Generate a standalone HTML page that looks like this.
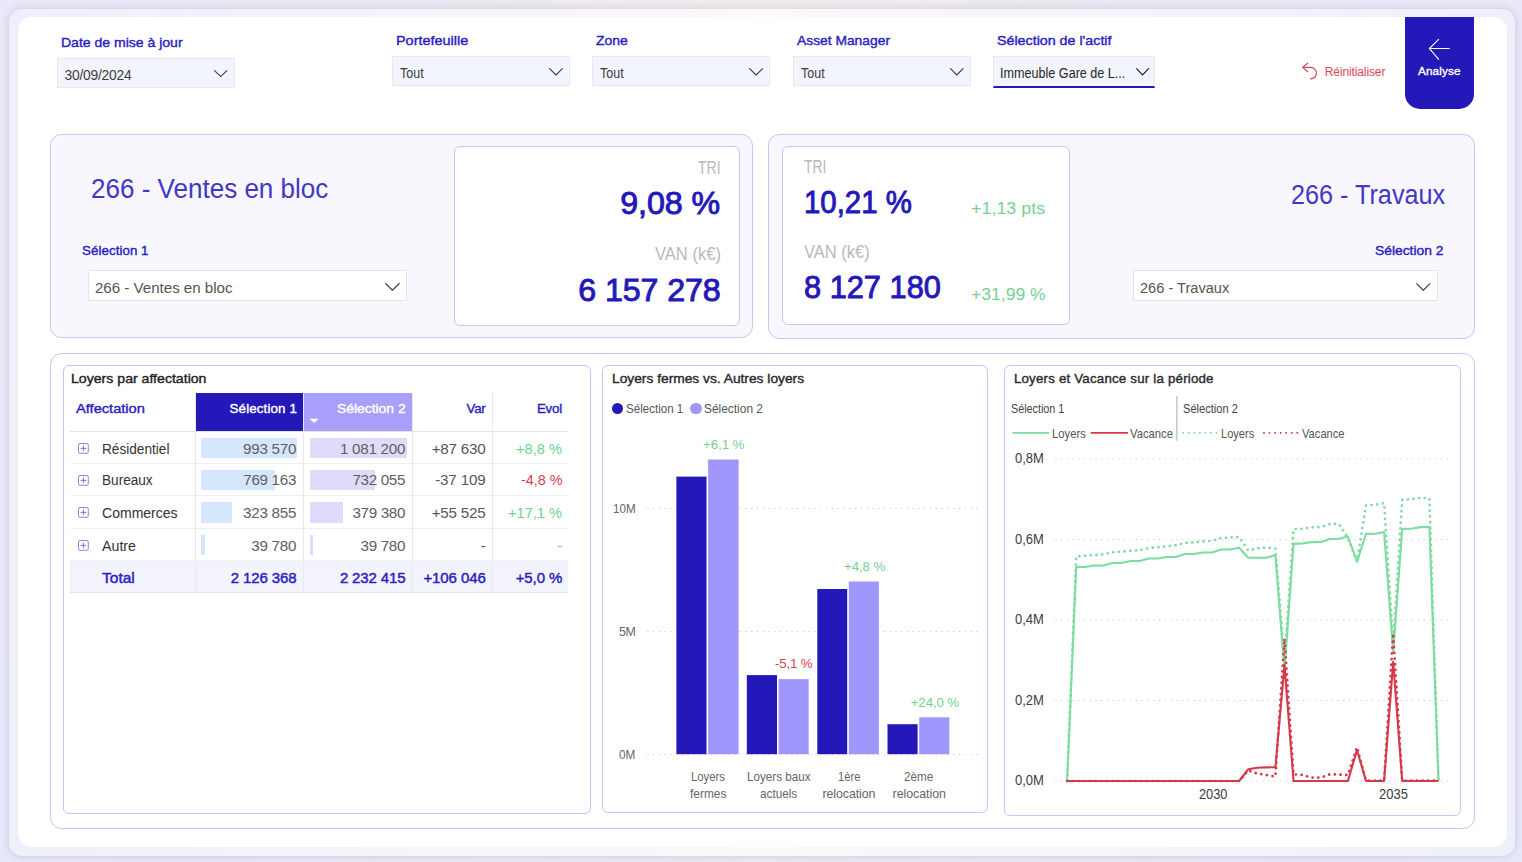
<!DOCTYPE html>
<html lang="fr">
<head>
<meta charset="utf-8">
<title>Analyse</title>
<style>
*{box-sizing:border-box;margin:0;padding:0}
html,body{width:1522px;height:862px;overflow:hidden}
body{position:relative;font-family:"Liberation Sans","DejaVu Sans",sans-serif;color:#444;
 background:linear-gradient(180deg,rgba(233,233,250,0) 0%,rgba(230,233,252,.45) 100%),linear-gradient(90deg,#e9e9f9 0%,#ece9f3 25%,#f2edf0 50%,#ece9f3 75%,#e9e9fa 100%);}
.abs{position:absolute}
#frame{position:absolute;left:9px;top:9px;width:1506px;height:847px;border-radius:13.5px;
 background:linear-gradient(90deg,#efeffc 0%,#f6f3fa 25%,#fcf9fa 50%,#f6f3fa 75%,#efeffc 100%);
 box-shadow:0 0 8px 0 rgba(80,78,110,.22)}
#sheet{position:absolute;left:18px;top:17px;width:1489px;height:830px;border-radius:14px;background:#fff}
.sel{position:absolute;background:#f3f5fe;border:1px solid #e7e8f1}
.selw{position:absolute;background:#fff;border:1px solid #e4e4ee}
.panel{position:absolute;background:#f7f7fd;border:1px solid #c7c4f6;border-radius:11.5px}
.card{position:absolute;background:#fff;border:1px solid #c7c4f6;border-radius:6px}
.t{position:absolute;white-space:nowrap}
</style>
</head>
<body>
<div id="frame"></div>
<div id="sheet"></div>

<!-- ===== header filters ===== -->
<div class="t" style="left:61.4px;top:35px;font-size:13.3px;line-height:15px;color:#2a1dc0;-webkit-text-stroke:0.39px #2a1dc0;transform:scaleX(1.0544);transform-origin:0 0;">Date de mise à jour</div>
<div class="sel" style="left:57px;top:58px;width:178px;height:30px"></div>
<div class="t" style="left:64.6px;top:68px;font-size:13.8px;line-height:15px;color:#3c3c3c;letter-spacing:-0.23px;">30/09/2024</div>
<svg class="abs" style="left:213.3px;top:69.3px" width="15.4" height="9.0" viewBox="-1 -1 15.4 9.0"><path d="M0.3 0.3 L6.70 6.60 L13.10 0.3" fill="none" stroke="#3a3a3a" stroke-width="1.1"/></svg>
<div class="t" style="left:396.2px;top:33px;font-size:13.3px;line-height:15px;color:#2a1dc0;-webkit-text-stroke:0.39px #2a1dc0;transform:scaleX(1.0851);transform-origin:0 0;">Portefeuille</div>
<div class="sel" style="left:392px;top:56px;width:178px;height:30px"></div>
<div class="t" style="left:400.0px;top:66px;font-size:13.8px;line-height:15px;color:#3c3c3c;transform:scaleX(0.9048);transform-origin:0 0;">Tout</div>
<svg class="abs" style="left:548.3px;top:67.4px" width="15.9" height="9.3" viewBox="-1 -1 15.9 9.3"><path d="M0.3 0.3 L6.95 6.90 L13.60 0.3" fill="none" stroke="#3a3a3a" stroke-width="1.1"/></svg>
<div class="t" style="left:596.0px;top:33px;font-size:13.3px;line-height:15px;color:#2a1dc0;-webkit-text-stroke:0.39px #2a1dc0;transform:scaleX(1.0490);transform-origin:0 0;">Zone</div>
<div class="sel" style="left:592px;top:56px;width:178px;height:30px"></div>
<div class="t" style="left:600.3px;top:66px;font-size:13.8px;line-height:15px;color:#3c3c3c;transform:scaleX(0.9048);transform-origin:0 0;">Tout</div>
<svg class="abs" style="left:748.0px;top:67.4px" width="16.2" height="9.3" viewBox="-1 -1 16.2 9.3"><path d="M0.3 0.3 L7.10 6.90 L13.90 0.3" fill="none" stroke="#3a3a3a" stroke-width="1.1"/></svg>
<div class="t" style="left:797.3px;top:33px;font-size:13.3px;line-height:15px;color:#2a1dc0;-webkit-text-stroke:0.39px #2a1dc0;transform:scaleX(1.0397);transform-origin:0 0;">Asset Manager</div>
<div class="sel" style="left:793px;top:56px;width:178px;height:30px"></div>
<div class="t" style="left:801.2px;top:66px;font-size:13.8px;line-height:15px;color:#3c3c3c;transform:scaleX(0.9048);transform-origin:0 0;">Tout</div>
<svg class="abs" style="left:949.0px;top:67.4px" width="15.7" height="9.3" viewBox="-1 -1 15.7 9.3"><path d="M0.3 0.3 L6.85 6.90 L13.40 0.3" fill="none" stroke="#3a3a3a" stroke-width="1.1"/></svg>
<div class="t" style="left:996.5px;top:33px;font-size:13.3px;line-height:15px;color:#2a1dc0;-webkit-text-stroke:0.39px #2a1dc0;transform:scaleX(1.0723);transform-origin:0 0;">Sélection de l'actif</div>
<div class="sel" style="left:992.5px;top:56px;width:162.5px;height:32px;border-bottom:2.4px solid #2518b8"></div>
<div class="t" style="left:1000.0px;top:66px;font-size:13.8px;line-height:15px;color:#262626;transform:scaleX(0.9133);transform-origin:0 0;">Immeuble Gare de L...</div>
<svg class="abs" style="left:1134.9px;top:67.4px" width="15.1" height="9.3" viewBox="-1 -1 15.1 9.3"><path d="M0.3 0.3 L6.55 6.90 L12.80 0.3" fill="none" stroke="#222" stroke-width="1.2"/></svg>
<svg class="abs" style="left:1300px;top:61px" width="20" height="20" viewBox="1300 61 20 20"><path d="M1307.7 63.2 L1302.6 67.4 L1307.7 71.7 M1302.8 67.4 H1310.8 A5.75 5.75 0 0 1 1310.6 78.9" fill="none" stroke="#d9485a" stroke-width="1.15" stroke-linecap="round" stroke-linejoin="round"/></svg>
<div class="t" style="left:1324.8px;top:65px;font-size:12px;line-height:14px;color:#d8485b;letter-spacing:-0.12px;">Réinitialiser</div>
<div class="abs" style="left:1405px;top:17px;width:69px;height:92px;background:#2518b8;border-radius:0 0 15px 15px"></div>
<svg class="abs" style="left:1426px;top:36px" width="26" height="26" viewBox="1426 36 26 26"><path d="M1438.9 39.2 L1429.4 48.5 L1438.9 59.6 M1429.4 48.5 H1449.7" fill="none" stroke="#fff" stroke-width="1.15" stroke-linejoin="miter"/></svg>
<div class="t" style="left:1418.0px;top:64px;font-size:11.7px;line-height:13px;color:#fff;-webkit-text-stroke:0.35px #fff;letter-spacing:0.16px;">Analyse</div>
<!-- ===== KPI panels ===== -->
<div class="panel" style="left:50px;top:134px;width:703px;height:203.5px"></div>
<div class="panel" style="left:768px;top:134px;width:707px;height:205px"></div>
<div class="card" style="left:454px;top:146px;width:286px;height:180px"></div>
<div class="card" style="left:782px;top:146px;width:288px;height:178.5px"></div>
<div class="t" style="left:91.0px;top:172px;font-size:28.4px;line-height:32px;color:#4338c6;transform:scaleX(0.9168);transform-origin:0 0;">266 - Ventes en bloc</div>
<div class="t" style="left:82.1px;top:243px;font-size:13.3px;line-height:15px;color:#2a1dc0;-webkit-text-stroke:0.39px #2a1dc0;letter-spacing:0.06px;">Sélection 1</div>
<div class="selw" style="left:88px;top:270px;width:319px;height:31px"></div>
<div class="t" style="left:94.9px;top:279px;font-size:15.2px;line-height:17px;color:#555;letter-spacing:-0.04px;">266 - Ventes en bloc</div>
<svg class="abs" style="left:383.6px;top:281.7px" width="16.8" height="9.7" viewBox="-1 -1 16.8 9.7"><path d="M0.3 0.3 L7.40 7.30 L14.50 0.3" fill="none" stroke="#444" stroke-width="1.2"/></svg>
<div class="t" style="left:698.2px;top:158px;font-size:17.6px;line-height:20px;color:#b9b9b9;transform:scaleX(0.7972);transform-origin:0 0;">TRI</div>
<div class="t" style="left:620.2px;top:185px;font-size:32.2px;line-height:36px;color:#2518b8;-webkit-text-stroke:0.95px #2518b8;letter-spacing:-0.07px;">9,08 %</div>
<div class="t" style="left:654.8px;top:244px;font-size:17.6px;line-height:20px;color:#b9b9b9;transform:scaleX(0.9417);transform-origin:0 0;">VAN (k€)</div>
<div class="t" style="left:578.3px;top:272px;font-size:32.2px;line-height:36px;color:#2518b8;-webkit-text-stroke:0.95px #2518b8;letter-spacing:-0.09px;">6 157 278</div>
<div class="t" style="left:803.6px;top:157px;font-size:17.6px;line-height:20px;color:#b9b9b9;transform:scaleX(0.7936);transform-origin:0 0;">TRI</div>
<div class="t" style="left:803.6px;top:184px;font-size:32.2px;line-height:36px;color:#2518b8;-webkit-text-stroke:0.95px #2518b8;transform:scaleX(0.9132);transform-origin:0 0;">10,21 %</div>
<div class="t" style="left:971.4px;top:199px;font-size:16.4px;line-height:18px;color:#74d394;transform:scaleX(1.0923);transform-origin:0 0;">+1,13 pts</div>
<div class="t" style="left:803.6px;top:242px;font-size:17.6px;line-height:20px;color:#b9b9b9;transform:scaleX(0.9375);transform-origin:0 0;">VAN (k€)</div>
<div class="t" style="left:804.1px;top:269px;font-size:32.2px;line-height:36px;color:#2518b8;-webkit-text-stroke:0.95px #2518b8;transform:scaleX(0.9557);transform-origin:0 0;">8 127 180</div>
<div class="t" style="left:970.9px;top:285px;font-size:16.4px;line-height:18px;color:#74d394;transform:scaleX(1.0709);transform-origin:0 0;">+31,99 %</div>
<div class="t" style="left:1290.7px;top:178px;font-size:28.4px;line-height:32px;color:#4338c6;transform:scaleX(0.8880);transform-origin:0 0;">266 - Travaux</div>
<div class="t" style="left:1374.7px;top:243px;font-size:13.3px;line-height:15px;color:#2a1dc0;-webkit-text-stroke:0.39px #2a1dc0;transform:scaleX(1.0394);transform-origin:0 0;">Sélection 2</div>
<div class="selw" style="left:1133px;top:270px;width:305px;height:31px"></div>
<div class="t" style="left:1139.9px;top:279px;font-size:15.2px;line-height:17px;color:#555;transform:scaleX(0.9609);transform-origin:0 0;">266 - Travaux</div>
<svg class="abs" style="left:1414.8px;top:281.7px" width="16.5" height="9.7" viewBox="-1 -1 16.5 9.7"><path d="M0.3 0.3 L7.25 7.30 L14.20 0.3" fill="none" stroke="#444" stroke-width="1.2"/></svg>
<!-- ===== bottom panel + table ===== -->
<div class="panel" style="left:50px;top:352.5px;width:1425px;height:476.5px;background:#fff"></div>
<div class="card" style="left:63px;top:365px;width:528px;height:449.4px"></div>
<div class="t" style="left:70.6px;top:371px;font-size:13.3px;line-height:15px;color:#222;-webkit-text-stroke:0.39px #222;transform:scaleX(1.0614);transform-origin:0 0;">Loyers par affectation</div>
<div class="abs" style="left:195.3px;top:392.7px;width:108.2px;height:38.3px;background:#2518b8"></div>
<div class="abs" style="left:303.8px;top:392.7px;width:108.9px;height:38.3px;background:#a79ffa"></div>
<div class="t" style="left:76.2px;top:401px;font-size:13.3px;line-height:15px;color:#2a1dc0;-webkit-text-stroke:0.39px #2a1dc0;transform:scaleX(1.1006);transform-origin:0 0;">Affectation</div>
<div class="t" style="left:229.6px;top:401px;font-size:13.3px;line-height:15px;color:#fff;-webkit-text-stroke:0.39px #fff;letter-spacing:0.15px;">Sélection 1</div>
<div class="t" style="left:337.4px;top:401px;font-size:13.3px;line-height:15px;color:#fff;-webkit-text-stroke:0.39px #fff;transform:scaleX(1.0425);transform-origin:0 0;">Sélection 2</div>
<svg class="abs" style="left:309px;top:418px" width="11" height="6" viewBox="0 0 11 6"><path d="M0.5 0.7 H9.7 L5.1 5 Z" fill="#fff"/></svg>
<div class="t" style="left:466.6px;top:401px;font-size:13.3px;line-height:15px;color:#2a1dc0;-webkit-text-stroke:0.39px #2a1dc0;letter-spacing:-0.25px;">Var</div>
<div class="t" style="left:536.9px;top:401px;font-size:13.3px;line-height:15px;color:#2a1dc0;-webkit-text-stroke:0.39px #2a1dc0;letter-spacing:-0.16px;">Evol</div>
<div class="abs" style="left:70px;top:560.3px;width:498px;height:31.7px;background:#f3f4fb"></div>
<div class="abs" style="left:70px;top:431.0px;width:498px;height:1px;background:#e4e4e8"></div>
<div class="abs" style="left:70px;top:463.2px;width:498px;height:1px;background:#efeff2"></div>
<div class="abs" style="left:70px;top:495.2px;width:498px;height:1px;background:#efeff2"></div>
<div class="abs" style="left:70px;top:527.9px;width:498px;height:1px;background:#efeff2"></div>
<div class="abs" style="left:70px;top:559.8px;width:498px;height:1px;background:#efeff2"></div>
<div class="abs" style="left:70px;top:592.0px;width:498px;height:1px;background:#e4e4e8"></div>
<div class="abs" style="left:194.6px;top:393px;width:1px;height:199px;background:#e9e9ed"></div>
<div class="abs" style="left:303.2px;top:393px;width:1px;height:199px;background:#e9e9ed"></div>
<div class="abs" style="left:412.4px;top:393px;width:1px;height:199px;background:#e9e9ed"></div>
<div class="abs" style="left:492.0px;top:393px;width:1px;height:199px;background:#e9e9ed"></div>
<div class="abs" style="left:201.4px;top:437.7px;width:95.7px;height:20.4px;background:#d4e7fd"></div>
<div class="abs" style="left:310px;top:437.7px;width:96.7px;height:20.4px;background:#dfdbfb"></div>
<svg class="abs" style="left:77.1px;top:442.1px" width="13" height="13" viewBox="-1 -1 13 13"><rect x="0.5" y="0.5" width="9.8" height="9.8" rx="1.6" fill="#fff" stroke="#8b82ea" stroke-width="1"/><path d="M2.6 5.4 H8.2 M5.4 2.6 V8.2" stroke="#7b72e0" stroke-width="1" fill="none"/></svg>
<div class="t" style="left:101.5px;top:440px;font-size:15.2px;line-height:17px;color:#333;transform:scaleX(0.8976);transform-origin:0 0;">Résidentiel</div>
<div class="t" style="left:243.1px;top:440px;font-size:15.2px;line-height:17px;color:#606060;letter-spacing:-0.27px;">993 570</div>
<div class="t" style="left:339.9px;top:440px;font-size:15.2px;line-height:17px;color:#606060;letter-spacing:-0.25px;">1 081 200</div>
<div class="t" style="left:431.7px;top:440px;font-size:15.2px;line-height:17px;color:#585858;letter-spacing:-0.21px;">+87 630</div>
<div class="t" style="left:516.4px;top:440px;font-size:15.2px;line-height:17px;color:#72d192;transform:scaleX(0.9614);transform-origin:0 0;">+8,8 %</div>
<div class="abs" style="left:201.4px;top:470.0px;width:73.5px;height:20.4px;background:#d4e7fd"></div>
<div class="abs" style="left:310px;top:470.0px;width:65.3px;height:20.4px;background:#dfdbfb"></div>
<svg class="abs" style="left:77.1px;top:473.8px" width="13" height="13" viewBox="-1 -1 13 13"><rect x="0.5" y="0.5" width="9.8" height="9.8" rx="1.6" fill="#fff" stroke="#8b82ea" stroke-width="1"/><path d="M2.6 5.4 H8.2 M5.4 2.6 V8.2" stroke="#7b72e0" stroke-width="1" fill="none"/></svg>
<div class="t" style="left:101.5px;top:471px;font-size:15.2px;line-height:17px;color:#333;transform:scaleX(0.8955);transform-origin:0 0;">Bureaux</div>
<div class="t" style="left:243.3px;top:471px;font-size:15.2px;line-height:17px;color:#606060;letter-spacing:-0.31px;">769 163</div>
<div class="t" style="left:352.4px;top:471px;font-size:15.2px;line-height:17px;color:#606060;letter-spacing:-0.31px;">732 055</div>
<div class="t" style="left:435.2px;top:471px;font-size:15.2px;line-height:17px;color:#585858;letter-spacing:-0.16px;">-37 109</div>
<div class="t" style="left:520.7px;top:471px;font-size:15.2px;line-height:17px;color:#d6404f;transform:scaleX(0.9470);transform-origin:0 0;">-4,8 %</div>
<div class="abs" style="left:201.4px;top:502.3px;width:31.1px;height:20.4px;background:#d4e7fd"></div>
<div class="abs" style="left:310px;top:502.3px;width:32.9px;height:20.4px;background:#dfdbfb"></div>
<svg class="abs" style="left:77.1px;top:506.3px" width="13" height="13" viewBox="-1 -1 13 13"><rect x="0.5" y="0.5" width="9.8" height="9.8" rx="1.6" fill="#fff" stroke="#8b82ea" stroke-width="1"/><path d="M2.6 5.4 H8.2 M5.4 2.6 V8.2" stroke="#7b72e0" stroke-width="1" fill="none"/></svg>
<div class="t" style="left:101.5px;top:504px;font-size:15.2px;line-height:17px;color:#333;transform:scaleX(0.9240);transform-origin:0 0;">Commerces</div>
<div class="t" style="left:243.1px;top:504px;font-size:15.2px;line-height:17px;color:#606060;letter-spacing:-0.27px;">323 855</div>
<div class="t" style="left:352.4px;top:504px;font-size:15.2px;line-height:17px;color:#606060;letter-spacing:-0.31px;">379 380</div>
<div class="t" style="left:431.7px;top:504px;font-size:15.2px;line-height:17px;color:#585858;letter-spacing:-0.21px;">+55 525</div>
<div class="t" style="left:508.2px;top:504px;font-size:15.2px;line-height:17px;color:#72d192;transform:scaleX(0.9627);transform-origin:0 0;">+17,1 %</div>
<div class="abs" style="left:201.4px;top:534.6px;width:3.5px;height:20.4px;background:#d4e7fd"></div>
<div class="abs" style="left:310px;top:534.6px;width:3.0px;height:20.4px;background:#dfdbfb"></div>
<svg class="abs" style="left:77.1px;top:539.1px" width="13" height="13" viewBox="-1 -1 13 13"><rect x="0.5" y="0.5" width="9.8" height="9.8" rx="1.6" fill="#fff" stroke="#8b82ea" stroke-width="1"/><path d="M2.6 5.4 H8.2 M5.4 2.6 V8.2" stroke="#7b72e0" stroke-width="1" fill="none"/></svg>
<div class="t" style="left:101.5px;top:537px;font-size:15.2px;line-height:17px;color:#333;transform:scaleX(0.9359);transform-origin:0 0;">Autre</div>
<div class="t" style="left:251.3px;top:537px;font-size:15.2px;line-height:17px;color:#606060;letter-spacing:-0.28px;">39 780</div>
<div class="t" style="left:360.6px;top:537px;font-size:15.2px;line-height:17px;color:#606060;letter-spacing:-0.32px;">39 780</div>
<div class="t" style="left:480.7px;top:537px;font-size:15.2px;line-height:17px;color:#585858;">-</div>
<div class="t" style="left:557.2px;top:537px;font-size:15.2px;line-height:17px;color:#72d192;">-</div>
<div class="t" style="left:101.5px;top:569px;font-size:15.0px;line-height:17px;color:#2a1dc0;-webkit-text-stroke:0.44px #2a1dc0;transform:scaleX(1.0352);transform-origin:0 0;">Total</div>
<div class="t" style="left:230.8px;top:569px;font-size:15.0px;line-height:17px;color:#2a1dc0;-webkit-text-stroke:0.44px #2a1dc0;letter-spacing:-0.12px;">2 126 368</div>
<div class="t" style="left:339.9px;top:569px;font-size:15.0px;line-height:17px;color:#2a1dc0;-webkit-text-stroke:0.44px #2a1dc0;letter-spacing:-0.14px;">2 232 415</div>
<div class="t" style="left:423.4px;top:569px;font-size:15.0px;line-height:17px;color:#2a1dc0;-webkit-text-stroke:0.44px #2a1dc0;letter-spacing:-0.08px;">+106 046</div>
<div class="t" style="left:515.7px;top:569px;font-size:15.0px;line-height:17px;color:#2a1dc0;-webkit-text-stroke:0.44px #2a1dc0;letter-spacing:-0.10px;">+5,0 %</div>
<!-- ===== bar chart ===== -->
<div class="card" style="left:602px;top:365px;width:386.2px;height:448.2px"></div>
<div class="t" style="left:611.8px;top:371px;font-size:13.3px;line-height:15px;color:#2a2a2a;-webkit-text-stroke:0.39px #2a2a2a;transform:scaleX(1.0354);transform-origin:0 0;">Loyers fermes vs. Autres loyers</div>
<div class="abs" style="left:611.8px;top:403.1px;width:11.4px;height:11.4px;border-radius:50%;background:#2518b8"></div>
<div class="t" style="left:625.7px;top:402px;font-size:12.4px;line-height:14px;color:#555;transform:scaleX(0.9339);transform-origin:0 0;">Sélection 1</div>
<div class="abs" style="left:690.3px;top:403.1px;width:11.4px;height:11.4px;border-radius:50%;background:#9f97fb"></div>
<div class="t" style="left:703.6px;top:402px;font-size:12.4px;line-height:14px;color:#555;transform:scaleX(0.9617);transform-origin:0 0;">Sélection 2</div>
<svg class="abs" style="left:602px;top:365px" width="386" height="448" viewBox="602 365 386 448"><line x1="647.4" y1="508.5" x2="978.5" y2="508.5" stroke="#c4c4c4" stroke-width="1" stroke-dasharray="1 4.77"/><line x1="647.4" y1="631.5" x2="978.5" y2="631.5" stroke="#c4c4c4" stroke-width="1" stroke-dasharray="1 4.77"/><line x1="647.4" y1="754.5" x2="978.5" y2="754.5" stroke="#c4c4c4" stroke-width="1" stroke-dasharray="1 4.77"/><rect x="676.4" y="476.6" width="30.1" height="277.6" fill="#2518b8"/><rect x="708.1" y="459.5" width="30.5" height="294.7" fill="#9f97fb"/><rect x="746.8" y="675.1" width="30.2" height="79.1" fill="#2518b8"/><rect x="778.6" y="679.1" width="30.1" height="75.1" fill="#9f97fb"/><rect x="817.3" y="589.0" width="29.9" height="165.2" fill="#2518b8"/><rect x="848.8" y="581.5" width="30.1" height="172.7" fill="#9f97fb"/><rect x="887.5" y="724.2" width="30.1" height="30.0" fill="#2518b8"/><rect x="919.2" y="717.3" width="30.2" height="36.9" fill="#9f97fb"/></svg>
<div class="t" style="left:613.1px;top:502px;font-size:12.4px;line-height:14px;color:#666;transform:scaleX(0.9410);transform-origin:0 0;">10M</div>
<div class="t" style="left:619.0px;top:625px;font-size:12.4px;line-height:14px;color:#666;letter-spacing:-0.43px;">5M</div>
<div class="t" style="left:619.2px;top:748px;font-size:12.4px;line-height:14px;color:#666;transform:scaleX(0.9463);transform-origin:0 0;">0M</div>
<div class="t" style="left:703.1px;top:437px;font-size:13.3px;line-height:15px;color:#72d192;letter-spacing:-0.10px;">+6,1 %</div>
<div class="t" style="left:775.1px;top:656px;font-size:13.3px;line-height:15px;color:#d6404f;letter-spacing:-0.17px;">-5,1 %</div>
<div class="t" style="left:844.0px;top:559px;font-size:13.3px;line-height:15px;color:#72d192;letter-spacing:-0.10px;">+4,8 %</div>
<div class="t" style="left:910.7px;top:695px;font-size:13.3px;line-height:15px;color:#72d192;letter-spacing:-0.11px;">+24,0 %</div>
<div class="t" style="left:691.0px;top:770px;font-size:12.4px;line-height:14px;color:#666;transform:scaleX(0.9135);transform-origin:0 0;">Loyers</div>
<div class="t" style="left:689.7px;top:787px;font-size:12.4px;line-height:14px;color:#666;transform:scaleX(0.9605);transform-origin:0 0;">fermes</div>
<div class="t" style="left:746.6px;top:770px;font-size:12.4px;line-height:14px;color:#666;transform:scaleX(0.9400);transform-origin:0 0;">Loyers baux</div>
<div class="t" style="left:759.6px;top:787px;font-size:12.4px;line-height:14px;color:#666;transform:scaleX(0.9468);transform-origin:0 0;">actuels</div>
<div class="t" style="left:837.8px;top:770px;font-size:12.4px;line-height:14px;color:#666;transform:scaleX(0.9066);transform-origin:0 0;">1ère</div>
<div class="t" style="left:822.4px;top:787px;font-size:12.4px;line-height:14px;color:#666;letter-spacing:-0.07px;">relocation</div>
<div class="t" style="left:904.4px;top:770px;font-size:12.4px;line-height:14px;color:#666;transform:scaleX(0.9414);transform-origin:0 0;">2ème</div>
<div class="t" style="left:892.6px;top:787px;font-size:12.4px;line-height:14px;color:#666;letter-spacing:-0.05px;">relocation</div>
<!-- ===== line chart ===== -->
<div class="card" style="left:1004px;top:365px;width:456.5px;height:450.8px"></div>
<div class="t" style="left:1013.9px;top:371px;font-size:13.3px;line-height:15px;color:#2a2a2a;-webkit-text-stroke:0.39px #2a2a2a;letter-spacing:0.20px;">Loyers et Vacance sur la période</div>
<div class="t" style="left:1011.4px;top:402px;font-size:12.4px;line-height:14px;color:#444;transform:scaleX(0.8704);transform-origin:0 0;">Sélection 1</div>
<div class="t" style="left:1182.8px;top:402px;font-size:12.4px;line-height:14px;color:#444;transform:scaleX(0.8948);transform-origin:0 0;">Sélection 2</div>
<div class="t" style="left:1052.1px;top:427px;font-size:12.4px;line-height:14px;color:#555;transform:scaleX(0.9082);transform-origin:0 0;">Loyers</div>
<div class="t" style="left:1129.9px;top:427px;font-size:12.4px;line-height:14px;color:#555;transform:scaleX(0.9084);transform-origin:0 0;">Vacance</div>
<div class="t" style="left:1221.2px;top:427px;font-size:12.4px;line-height:14px;color:#555;transform:scaleX(0.8947);transform-origin:0 0;">Loyers</div>
<div class="t" style="left:1302.3px;top:427px;font-size:12.4px;line-height:14px;color:#555;transform:scaleX(0.9000);transform-origin:0 0;">Vacance</div>
<svg class="abs" style="left:1005px;top:390px" width="455" height="420" viewBox="1005 390 455 420"><line x1="1176.9" y1="396" x2="1176.9" y2="440.8" stroke="#bdbdbd" stroke-width="1.3"/><line x1="1012.4" y1="432.9" x2="1049.4" y2="432.9" stroke="#7ddc9f" stroke-width="1.8"/><line x1="1090.8" y1="432.9" x2="1128" y2="432.9" stroke="#d6394a" stroke-width="1.8"/><line x1="1182.4" y1="432.9" x2="1219" y2="432.9" stroke="#7ddc9f" stroke-width="1.9" stroke-dasharray="1.6 3.95"/><line x1="1263.2" y1="432.9" x2="1300" y2="432.9" stroke="#d6394a" stroke-width="1.9" stroke-dasharray="1.6 3.95"/><line x1="1055.4" y1="458.9" x2="1449.5" y2="458.9" stroke="#c4c4c4" stroke-width="1" stroke-dasharray="1 4.757"/><line x1="1055.4" y1="539.6" x2="1449.5" y2="539.6" stroke="#c4c4c4" stroke-width="1" stroke-dasharray="1 4.757"/><line x1="1055.4" y1="620.1" x2="1449.5" y2="620.1" stroke="#c4c4c4" stroke-width="1" stroke-dasharray="1 4.757"/><line x1="1055.4" y1="700.5" x2="1449.5" y2="700.5" stroke="#c4c4c4" stroke-width="1" stroke-dasharray="1 4.757"/><line x1="1055.4" y1="781.0" x2="1449.5" y2="781.0" stroke="#c4c4c4" stroke-width="1" stroke-dasharray="1 4.757"/><polyline points="1067.1,781.0 1076.2,567.0 1085.2,567.0 1094.3,565.5 1103.3,565.5 1112.4,563.0 1121.4,563.0 1130.5,561.0 1139.6,561.0 1148.6,558.5 1157.7,558.5 1166.7,557.0 1175.8,557.0 1184.9,554.0 1193.9,554.0 1203.0,552.5 1212.0,552.5 1221.1,549.5 1230.1,549.5 1239.2,547.8 1248.3,557.8 1257.3,557.8 1266.4,557.8 1275.4,555.1 1284.5,670.6 1293.5,543.9 1302.6,543.4 1311.7,542.1 1320.7,541.9 1329.8,539.0 1338.8,538.8 1347.9,536.6 1357.0,561.5 1366.0,533.9 1375.1,533.7 1384.1,532.0 1393.2,652.0 1402.2,528.9 1411.3,528.7 1420.4,527.1 1429.4,527.1 1438.5,781.0" fill="none" stroke="#7ddc9f" stroke-width="2.1" stroke-linejoin="round"/><polyline points="1067.1,781.0 1076.2,556.3 1085.2,555.7 1094.3,555.0 1103.3,554.4 1112.4,552.3 1121.4,551.6 1130.5,550.9 1139.6,550.2 1148.6,548.1 1157.7,547.2 1166.7,546.3 1175.8,545.4 1184.9,542.9 1193.9,542.2 1203.0,541.5 1212.0,540.8 1221.1,538.1 1230.1,537.5 1239.2,537.0 1248.3,550.5 1257.3,548.3 1266.4,547.5 1275.4,548.7 1284.5,660.0 1293.5,529.1 1302.6,528.7 1311.7,527.3 1320.7,527.1 1329.8,524.0 1338.8,523.8 1347.9,538.0 1357.0,561.5 1366.0,505.3 1375.1,504.8 1384.1,503.1 1393.2,643.0 1402.2,499.8 1411.3,499.3 1420.4,497.8 1429.4,498.2 1438.5,781.0" fill="none" stroke="#7ddc9f" stroke-width="2.7" stroke-linejoin="round" stroke-linecap="round" stroke-dasharray="0.1 5.6"/><polyline points="1067.1,781.0 1076.2,781.0 1085.2,781.0 1094.3,781.0 1103.3,781.0 1112.4,781.0 1121.4,781.0 1130.5,781.0 1139.6,781.0 1148.6,781.0 1157.7,781.0 1166.7,781.0 1175.8,781.0 1184.9,781.0 1193.9,781.0 1203.0,781.0 1212.0,781.0 1221.1,781.0 1230.1,781.0 1239.2,781.0 1248.3,769.2 1257.3,767.7 1266.4,767.4 1275.4,767.2 1284.5,665.1 1293.5,781.0 1302.6,781.0 1311.7,781.0 1320.7,781.0 1329.8,781.0 1338.8,781.0 1347.9,781.0 1357.0,750.0 1366.0,781.0 1375.1,781.0 1384.1,781.0 1393.2,661.8 1402.2,781.0 1411.3,781.0 1420.4,781.0 1429.4,781.0 1438.5,781.0" fill="none" stroke="#d6394a" stroke-width="2.1" stroke-linejoin="round"/><polyline points="1067.1,781.0 1076.2,781.0 1085.2,781.0 1094.3,781.0 1103.3,781.0 1112.4,781.0 1121.4,781.0 1130.5,781.0 1139.6,781.0 1148.6,781.0 1157.7,781.0 1166.7,781.0 1175.8,781.0 1184.9,781.0 1193.9,781.0 1203.0,781.0 1212.0,781.0 1221.1,781.0 1230.1,781.0 1239.2,781.0 1248.3,770.5 1257.3,773.5 1266.4,775.0 1275.4,776.5 1284.5,638.7 1293.5,774.3 1302.6,775.0 1311.7,777.6 1320.7,777.6 1329.8,774.3 1338.8,774.5 1347.9,775.0 1357.0,747.2 1366.0,780.5 1375.1,780.5 1384.1,780.5 1393.2,633.2 1402.2,780.5 1411.3,780.5 1420.4,780.5 1429.4,780.5 1438.5,780.5" fill="none" stroke="#d6394a" stroke-width="2.7" stroke-linejoin="round" stroke-linecap="round" stroke-dasharray="0.1 5.6"/></svg>
<div class="t" style="left:1014.7px;top:451px;font-size:13.8px;line-height:15px;color:#3d3d3d;transform:scaleX(0.9420);transform-origin:0 0;">0,8M</div>
<div class="t" style="left:1014.7px;top:532px;font-size:13.8px;line-height:15px;color:#3d3d3d;transform:scaleX(0.9420);transform-origin:0 0;">0,6M</div>
<div class="t" style="left:1014.7px;top:612px;font-size:13.8px;line-height:15px;color:#3d3d3d;transform:scaleX(0.9420);transform-origin:0 0;">0,4M</div>
<div class="t" style="left:1014.7px;top:693px;font-size:13.8px;line-height:15px;color:#3d3d3d;transform:scaleX(0.9420);transform-origin:0 0;">0,2M</div>
<div class="t" style="left:1014.7px;top:773px;font-size:13.8px;line-height:15px;color:#3d3d3d;transform:scaleX(0.9420);transform-origin:0 0;">0,0M</div>
<div class="t" style="left:1198.9px;top:787px;font-size:13.8px;line-height:15px;color:#3d3d3d;transform:scaleX(0.9283);transform-origin:0 0;">2030</div>
<div class="t" style="left:1379.4px;top:787px;font-size:13.8px;line-height:15px;color:#3d3d3d;transform:scaleX(0.9414);transform-origin:0 0;">2035</div>
</body>
</html>
